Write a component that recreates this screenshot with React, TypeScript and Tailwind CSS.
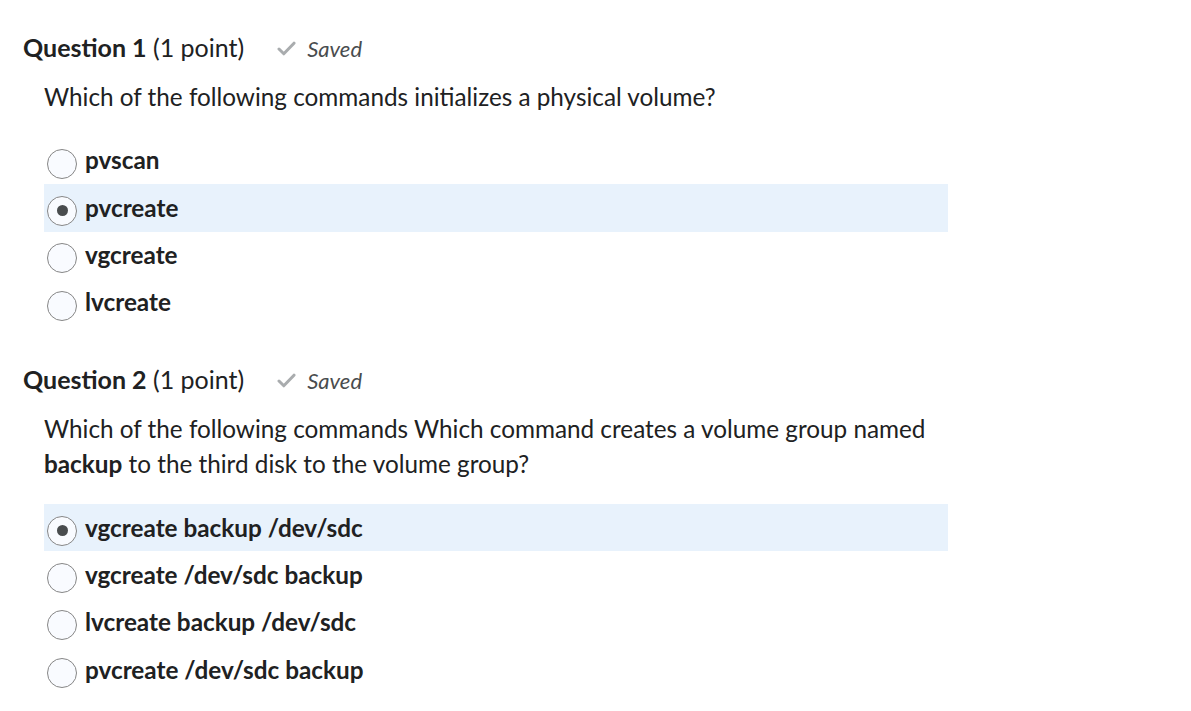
import React, { useState } from "react"

type Question = {
    id: number
    prompt: React.ReactNode
    options: string[]
    selected: number
}

const questions: Question[] = [
    {
        id: 1,
        prompt: "Which of the following commands initializes a physical volume?",
        options: ["pvscan", "pvcreate", "vgcreate", "lvcreate"],
        selected: 1,
    },
    {
        id: 2,
        prompt: (
            <>
                Which of the following commands Which command creates a volume group named
                <br />
                <span className="font-bold">backup</span> to the third disk to the volume group?
            </>
        ),
        options: [
            "vgcreate backup /dev/sdc",
            "vgcreate /dev/sdc backup",
            "lvcreate backup /dev/sdc",
            "pvcreate /dev/sdc backup",
        ],
        selected: 0,
    },
]

const CheckIcon = () => (
    <svg width="19" height="15" viewBox="0 0 19 15" fill="none">
        <path d="M2 8 L6.8 12.8 L17 2.2" stroke="#a9acae" strokeWidth="3" strokeLinecap="round" strokeLinejoin="round" />
    </svg>
)

const Radio = ({ checked }: { checked: boolean }) => (
    <span className="flex h-[30px] w-[30px] shrink-0 items-center justify-center rounded-full border border-[#868686] bg-[#f9fbff]">
        {checked && <span className="h-[11px] w-[11px] rounded-full bg-[#494c4e]" />}
    </span>
)

const QuestionBlock = ({ q }: { q: Question }) => {
    const [selected, setSelected] = useState(q.selected)

    return (
        <div>
            <div className="flex items-center h-[48px]">
                <h2 className="text-[25px] text-[#202122]">
                    <span className="font-bold">Question {q.id}</span> (1 point)
                </h2>
                <div className="ml-[33px] flex items-center gap-[11px] text-[22px] italic text-[#494c4e]">
                    <CheckIcon />
                    Saved
                </div>
            </div>
            <p className="mt-[7px] pl-[21px] text-[24.3px] leading-[35px] text-[#202122]">{q.prompt}</p>
            <div className="mt-[23px] w-[904px] ml-[21px]">
                {q.options.map((opt, i) => (
                    <label
                        key={opt}
                        onClick={() => setSelected(i)}
                        className={`flex h-[47.3px] cursor-pointer items-center gap-[8px] pl-[3px] ${
                            selected === i ? "bg-[#e8f2fc]" : ""
                        }`}
                    >
                        <span className="mt-[6px]">
                            <Radio checked={selected === i} />
                        </span>
                        <span className="text-[24.3px] font-bold text-[#202122]">{opt}</span>
                    </label>
                ))}
            </div>
        </div>
    )
}

const App = () => {
    return (
        <div className="min-h-screen bg-white pl-[23px] pt-[24px]" style={{ fontFamily: "Lato, 'Noto Sans', sans-serif" }}>
            <QuestionBlock q={questions[0]} />
            <div className="mt-[30px]">
                <QuestionBlock q={questions[1]} />
            </div>
        </div>
    )
}

export default App
